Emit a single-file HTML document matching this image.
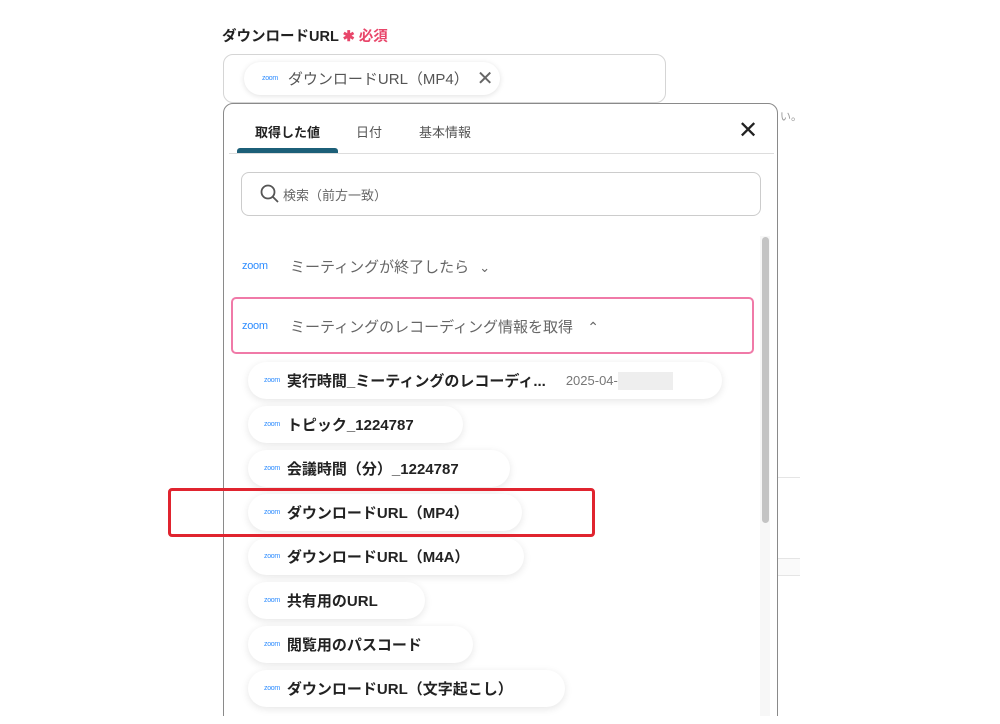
<!DOCTYPE html>
<html><head><meta charset="utf-8"><style>
*{box-sizing:border-box;margin:0;padding:0}
html{width:1000px;height:724px;overflow:hidden}
body{width:1000px;height:724px;background:#fff;font-family:"Liberation Sans","Noto Sans CJK JP",sans-serif;position:relative;overflow:hidden;color:#333}
.abs{position:absolute}
.zoom{color:#2d8cff;font-weight:bold;letter-spacing:-0.3px}
.pill{position:absolute;left:248px;height:37px;border-radius:19px;background:#fff;box-shadow:0 2px 8px rgba(0,0,0,0.10);display:flex;align-items:center;padding-left:16px;font-size:15px;font-weight:bold;color:#222;white-space:nowrap}
.pill .zoom{font-size:7px;margin-right:7px;font-weight:normal}
</style></head><body>
<div class="abs" style="left:222px;top:25px;font-size:14.5px;font-weight:bold;color:#222">ダウンロードURL <span style="color:#e8466a">✱ 必須</span></div>
<div class="abs" style="left:223px;top:54px;width:443px;height:49px;border:1px solid #d5d5d5;border-radius:10px"></div>
<div class="abs" style="left:244px;top:62px;width:256px;height:33px;border-radius:17px;box-shadow:0 1px 6px rgba(0,0,0,0.12);display:flex;align-items:center;padding-left:18px;font-size:15px;color:#555;background:#fff">
<span class="zoom" style="font-size:7px;font-weight:normal;margin-right:10px">zoom</span>ダウンロードURL（MP4）<span style="margin-left:8px;font-size:20px;color:#666">✕</span></div>
<div class="abs" style="left:780px;top:108px;font-size:11px;color:#999">い。</div>
<div class="abs" style="left:777px;top:477px;width:23px;height:1px;background:#e5e5e5"></div>
<div class="abs" style="left:777px;top:558px;width:23px;height:18px;border-top:1px solid #e5e5e5;border-bottom:1px solid #e5e5e5;background:#fafafa"></div>
<div class="abs" style="left:223px;top:103px;width:555px;height:640px;border:1px solid #8a8a8a;border-radius:10px;background:#fff;overflow:hidden">
 <div class="abs" style="left:31px;top:18px;font-size:13px;font-weight:bold;color:#222">取得した値</div>
 <div class="abs" style="left:132px;top:18px;font-size:13px;color:#555">日付</div>
 <div class="abs" style="left:195px;top:18px;font-size:13px;color:#555">基本情報</div>
 <div class="abs" style="left:13px;top:44px;width:101px;height:5px;background:#1c5f78;border-radius:3px 3px 0 0"></div>
 <div class="abs" style="left:5px;top:49px;width:545px;height:1px;background:#ddd"></div>
 <div class="abs" style="left:514px;top:12px;font-size:24px;color:#222">✕</div>
 <div class="abs" style="left:17px;top:68px;width:520px;height:44px;border:1px solid #ccc;border-radius:8px"></div>
 <svg class="abs" style="left:36px;top:80px" width="20" height="20" viewBox="0 0 20 20"><circle cx="8" cy="8" r="6.5" fill="none" stroke="#555" stroke-width="1.8"/><path d="M13 13l5 5" stroke="#555" stroke-width="1.8"/></svg>
 <div class="abs" style="left:59px;top:81px;font-size:13px;color:#666">検索（前方一致）</div>
 <div class="abs" style="left:536px;top:132px;width:10px;height:508px;background:#f7f7f7"></div>
 <div class="abs" style="left:538px;top:133px;width:7px;height:286px;background:#c4c4c4;border-radius:4px"></div>
 <div class="abs" style="left:18px;top:156px;font-size:11px" ><span class="zoom" style="font-weight:normal">zoom</span></div>
 <div class="abs" style="left:66px;top:152px;font-size:15px;color:#666">ミーティングが終了したら <span style="font-size:13px;margin-left:6px">&#8964;</span></div>
 <div class="abs" style="left:7px;top:193px;width:523px;height:57px;border:2px solid #f07aa8;border-radius:5px"></div>
 <div class="abs" style="left:18px;top:216px;font-size:11px"><span class="zoom" style="font-weight:normal">zoom</span></div>
 <div class="abs" style="left:66px;top:212px;font-size:15px;color:#666">ミーティングのレコーディング情報を取得 <span style="margin-left:10px;font-size:14px">&#8963;</span></div>
</div>
<div class="pill" style="top:362px;width:474px"><span class="zoom">zoom</span>実行時間_ミーティングのレコーディ...<span style="font-weight:normal;color:#777;font-size:13px;margin-left:20px">2025-04-</span><span style="display:inline-block;width:55px;height:18px;background:#eee"></span></div>
<div class="pill" style="top:406px;width:215px"><span class="zoom">zoom</span>トピック_1224787</div>
<div class="pill" style="top:450px;width:262px"><span class="zoom">zoom</span>会議時間（分）_1224787</div>
<div class="pill" style="top:494px;width:274px"><span class="zoom">zoom</span>ダウンロードURL（MP4）</div>
<div class="pill" style="top:538px;width:276px"><span class="zoom">zoom</span>ダウンロードURL（M4A）</div>
<div class="pill" style="top:582px;width:177px"><span class="zoom">zoom</span>共有用のURL</div>
<div class="pill" style="top:626px;width:225px"><span class="zoom">zoom</span>閲覧用のパスコード</div>
<div class="pill" style="top:670px;width:317px"><span class="zoom">zoom</span>ダウンロードURL（文字起こし）</div>
<div class="abs" style="left:168px;top:488px;width:427px;height:49px;border:3px solid #e0242f;border-radius:4px"></div>
<div class="abs" style="left:0;top:716px;width:1000px;height:8px;background:#fff"></div>
</body></html>
